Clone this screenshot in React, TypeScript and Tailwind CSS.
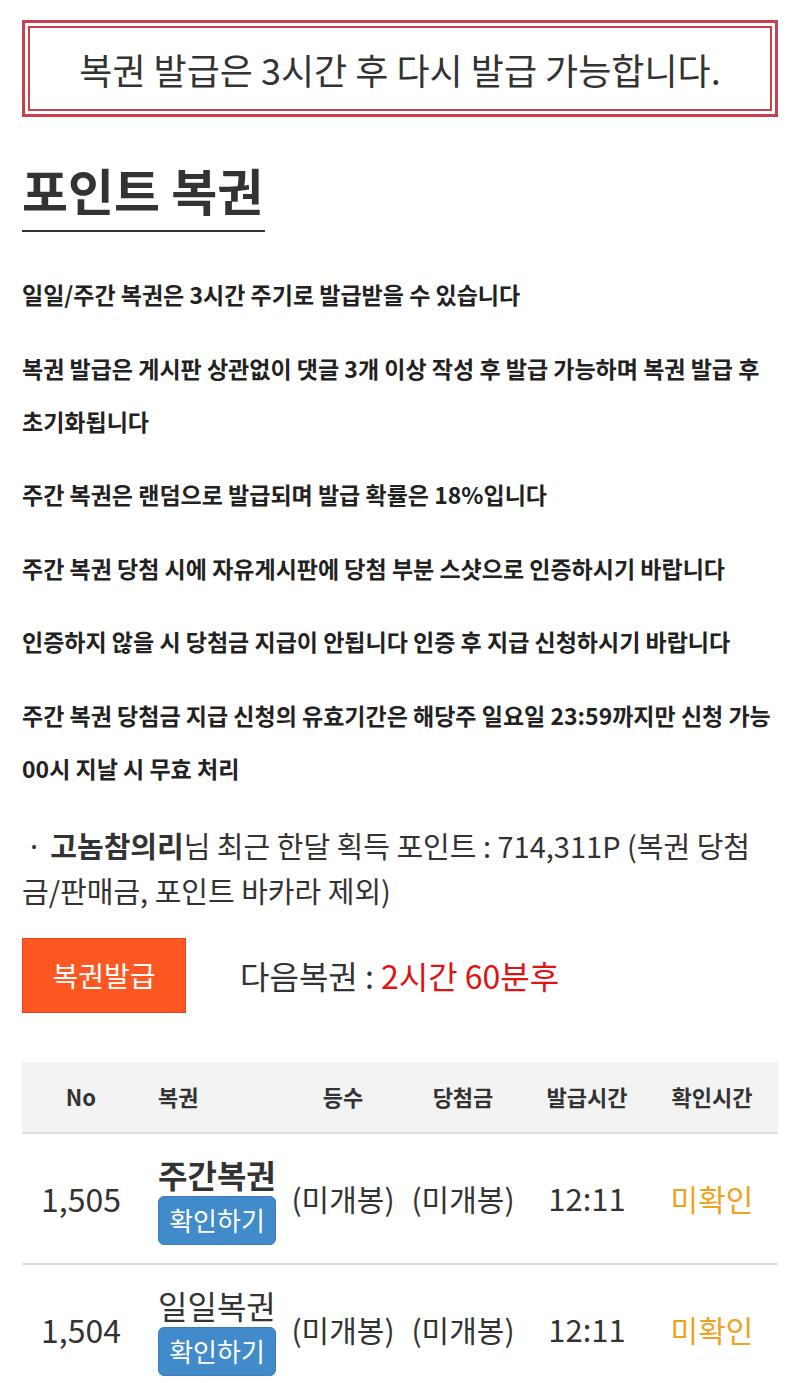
import React from "react";

const font = { fontFamily: '"Noto Sans CJK KR", "Noto Sans", sans-serif' };

const notes: string[][] = [
  ["일일/주간 복권은 3시간 주기로 발급받을 수 있습니다"],
  ["복권 발급은 게시판 상관없이 댓글 3개 이상 작성 후 발급 가능하며 복권 발급 후", "초기화됩니다"],
  ["주간 복권은 랜덤으로 발급되며 발급 확률은 18%입니다"],
  ["주간 복권 당첨 시에 자유게시판에 당첨 부분 스샷으로 인증하시기 바랍니다"],
  ["인증하지 않을 시 당첨금 지급이 안됩니다 인증 후 지급 신청하시기 바랍니다"],
  ["주간 복권 당첨금 지급 신청의 유효기간은 해당주 일요일 23:59까지만 신청 가능", "00시 지날 시 무효 처리"],
];

const rows = [
  { no: "1,505", name: "주간복권", bold: true },
  { no: "1,504", name: "일일복권", bold: false },
];

export default function App() {
  return (
    <div className="w-[800px] bg-white text-[#333] px-[22px] pt-[20px] pb-[40px]" style={font}>
      {/* Alert */}
      <div className="border-[3px] border-[#c8414f] p-[3px]">
        <div className="border-2 border-[#c8414f] h-[85px] flex items-center justify-center text-[36px] leading-none text-[#333]">
          복권 발급은 3시간 후 다시 발급 가능합니다.
        </div>
      </div>

      {/* Title */}
      <h1 className="mt-[45px] w-fit text-[50px] leading-[55px] font-bold text-[#333] border-b-2 border-[#333] pb-[13px] pr-[2px]">
        포인트 복권
      </h1>

      {/* Notes */}
      <div className="mt-[36px]">
        {notes.map((lines, i) => (
          <p key={i} className="text-[23px] leading-[53px] font-bold text-[#222] mb-[20.6px] whitespace-nowrap">
            {lines.map((l, j) => (
              <React.Fragment key={j}>
                {j > 0 && <br />}
                {l}
              </React.Fragment>
            ))}
          </p>
        ))}
      </div>

      {/* Points */}
      <p className="mt-[28px] text-[29px] leading-[45px] text-[#333] whitespace-nowrap">
        <span className="pl-[4px] pr-[8px]">·</span>
        <b className="font-bold">고놈참의리</b>님 최근 한달 획득 포인트 : 714,311P (복권 당첨
        <br />
        금/판매금, 포인트 바카라 제외)
      </p>

      {/* Issue button */}
      <div className="mt-[25px] flex items-center">
        <button className="w-[164px] h-[75px] bg-[#ff5722] border border-[#e2481c] text-white text-[28px] leading-none">
          복권발급
        </button>
        <div className="ml-[54px] text-[32px] leading-none text-[#333]">
          다음복권 : <span className="text-[#dd1414]">2시간 60분후</span>
        </div>
      </div>

      {/* Table */}
      <table className="mt-[49px] w-[756px] table-fixed border-collapse">
        <colgroup>
          <col className="w-[118px]" />
          <col className="w-[148px]" />
          <col className="w-[110px]" />
          <col className="w-[130px]" />
          <col className="w-[118px]" />
          <col className="w-[132px]" />
        </colgroup>
        <thead>
          <tr className="bg-[#f3f3f3] h-[71px] border-b-2 border-[#dedede] text-[22px] font-bold text-[#333]">
            <th className="text-center font-bold">No</th>
            <th className="text-left pl-[18px] font-bold">복권</th>
            <th className="text-center font-bold">등수</th>
            <th className="text-center font-bold">당첨금</th>
            <th className="text-center font-bold">발급시간</th>
            <th className="text-center font-bold">확인시간</th>
          </tr>
        </thead>
        <tbody>
          {rows.map((r) => (
            <tr key={r.no} className="border-b-2 border-[#dedede] text-[30px] text-[#333]">
              <td className="text-center align-middle text-[32px]">{r.no}</td>
              <td className="pl-[18px] pt-[20px] pb-[18px] align-middle">
                <div className={`text-[32px] leading-[40px] whitespace-nowrap ${r.bold ? "font-bold" : "font-normal"}`}>{r.name}</div>
                <button className="mt-[2px] w-[118px] h-[49px] rounded-[6px] bg-[#428bca] border border-[#3a7dba] text-white text-[26px] leading-none">
                  확인하기
                </button>
              </td>
              <td className="text-center align-middle whitespace-nowrap">(미개봉)</td>
              <td className="text-center align-middle whitespace-nowrap">(미개봉)</td>
              <td className="text-center align-middle text-[31px]">12:11</td>
              <td className="text-center align-middle text-[#eea31c]">미확인</td>
            </tr>
          ))}
        </tbody>
      </table>
    </div>
  );
}
